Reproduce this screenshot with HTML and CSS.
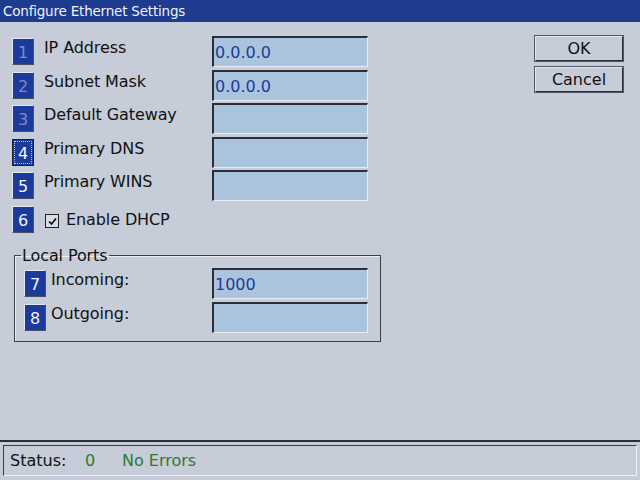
FILE: index.html
```html
<!DOCTYPE html>
<html lang="en">
<head>
  <meta charset="UTF-8" />
  <meta name="viewport" content="width=device-width, initial-scale=1" />
  <title>Configure Ethernet Settings</title>
  <link rel="stylesheet" href="styles.css">
</head>
<body>
  <div class="window">
    <div class="titlebar">Configure Ethernet Settings</div>

    <div class="content">
      <div class="form">
        <div class="row">
          <span class="key dim">1</span>
          <label class="label">IP Address</label>
          <div class="field">0.0.0.0</div>
        </div>
        <div class="row">
          <span class="key dim">2</span>
          <label class="label">Subnet Mask</label>
          <div class="field">0.0.0.0</div>
        </div>
        <div class="row">
          <span class="key dim">3</span>
          <label class="label">Default Gateway</label>
          <div class="field"></div>
        </div>
        <div class="row">
          <span class="key focus">4</span>
          <label class="label">Primary DNS</label>
          <div class="field"></div>
        </div>
        <div class="row">
          <span class="key">5</span>
          <label class="label">Primary WINS</label>
          <div class="field"></div>
        </div>
        <div class="row">
          <span class="key">6</span>
          <span class="check">
            <svg width="11" height="11" viewBox="0 0 11 11"><path d="M2 5.5 L4.5 8 L9 2.5" fill="none" stroke="#111" stroke-width="1.7"/></svg>
          </span>
          <label class="label check-label">Enable DHCP</label>
        </div>

        <fieldset class="group">
          <legend>Local Ports</legend>
          <div class="row">
            <span class="key">7</span>
            <label class="label small">Incoming:</label>
            <div class="field">1000</div>
          </div>
          <div class="row">
            <span class="key">8</span>
            <label class="label small">Outgoing:</label>
            <div class="field"></div>
          </div>
        </fieldset>
      </div>

      <div class="actions">
        <button class="button">OK</button>
        <button class="button">Cancel</button>
      </div>
    </div>

    <div class="statusbar">
      <div class="status-box">
        <span class="status-label">Status:</span>
        <span class="status-code">0</span>
        <span class="status-text">No Errors</span>
      </div>
    </div>
  </div>
</body>
</html>
```

FILE: styles.css
```css
body {
  margin: 0;
  padding: 0;
  font-family: 'DejaVu Sans', sans-serif;
  background: #c6ccd8;
}
.window {
  width: 640px;
  height: 480px;
  display: flex;
  flex-direction: column;
  background: #c6ccd8;
  overflow: hidden;
}
.titlebar {
  height: 22px;
  line-height: 22px;
  background: #1d3b8f;
  color: #f0f2f8;
  font-size: 13.5px;
  padding-left: 3px;
  letter-spacing: -0.2px;
}
.content {
  flex: 1;
  display: flex;
  justify-content: space-between;
  padding: 14px 17px 0 12px;
}
.form {
  width: 370px;
}
.row {
  display: flex;
  align-items: center;
  height: 31px;
  margin-bottom: 2.5px;
}
.key {
  width: 20px;
  height: 25px;
  background: #1a3a9c;
  border: 1px solid #e4e8f0;
  border-right-color: #4a5060;
  border-bottom-color: #4a5060;
  color: #f2f4fa;
  font-size: 16px;
  line-height: 27px;
  text-align: center;
  flex: none;
}
.key.dim {
  color: #7d8cc0;
}
.key.focus {
  outline: 1px dotted #c0c8e0;
  outline-offset: -3px;
  border-color: #202020;
}
.label {
  width: 168px;
  margin-left: 10px;
  font-size: 16px;
  color: #111;
  letter-spacing: -0.1px;
  align-self: flex-start;
  padding-top: 2px;
}
.field {
  box-sizing: border-box;
  width: 156px;
  height: 31px;
  background: #a9c4dc;
  border-top: 2px solid #2a2e38;
  border-left: 2px solid #2a2e38;
  border-right: 1px solid #e8ecf2;
  border-bottom: 1px solid #e8ecf2;
  color: #1f3a9a;
  font-size: 16px;
  line-height: 29px;
  padding-left: 1px;
}
.check {
  width: 12px;
  height: 12px;
  border: 1px solid #222;
  background: #d8dce6;
  margin-left: 11px;
  margin-top: 4px;
  display: flex;
  align-items: center;
  justify-content: center;
  flex: none;
}
.check-label {
  margin-left: 7px;
  padding-top: 6px;
}
.group {
  margin: 11px 0 0 2px;
  padding: 3px 0 5px 9px;
  width: 356px;
  border: 1px solid #3a3e48;
  box-shadow: inset 1px 1px 0 #eef0f5;
}
.group legend {
  font-size: 16px;
  color: #111;
  padding: 0 1px;
  margin-left: -3px;
  letter-spacing: -0.1px;
}
.group .row {
  margin-bottom: 3px;
}
.label.small {
  width: 161px;
  margin-left: 5px;
}
.actions {
  display: flex;
  flex-direction: column;
  gap: 6px;
}
.button {
  width: 88px;
  height: 25px;
  background: #c6ccd8;
  border: 1px solid #e4e8f0;
  border-right-color: #2a2e38;
  border-bottom-color: #2a2e38;
  box-shadow: 0 0 0 1px #505664;
  font-family: 'DejaVu Sans', sans-serif;
  font-size: 16px;
  color: #111;
  padding: 0;
}
.statusbar {
  border-top: 2px solid #2a2e38;
  padding: 3px 3px 4px 3px;
}
.status-box {
  height: 29px;
  border-top: 1px solid #3a3e48;
  border-left: 1px solid #3a3e48;
  border-right: 1px solid #eef0f5;
  border-bottom: 1px solid #eef0f5;
  display: flex;
  align-items: center;
  padding-left: 6px;
  font-size: 16px;
}
.status-label {
  color: #111;
  width: 75px;
}
.status-code {
  color: #2e7a34;
  width: 37px;
}
.status-text {
  color: #2e7a34;
}
```
